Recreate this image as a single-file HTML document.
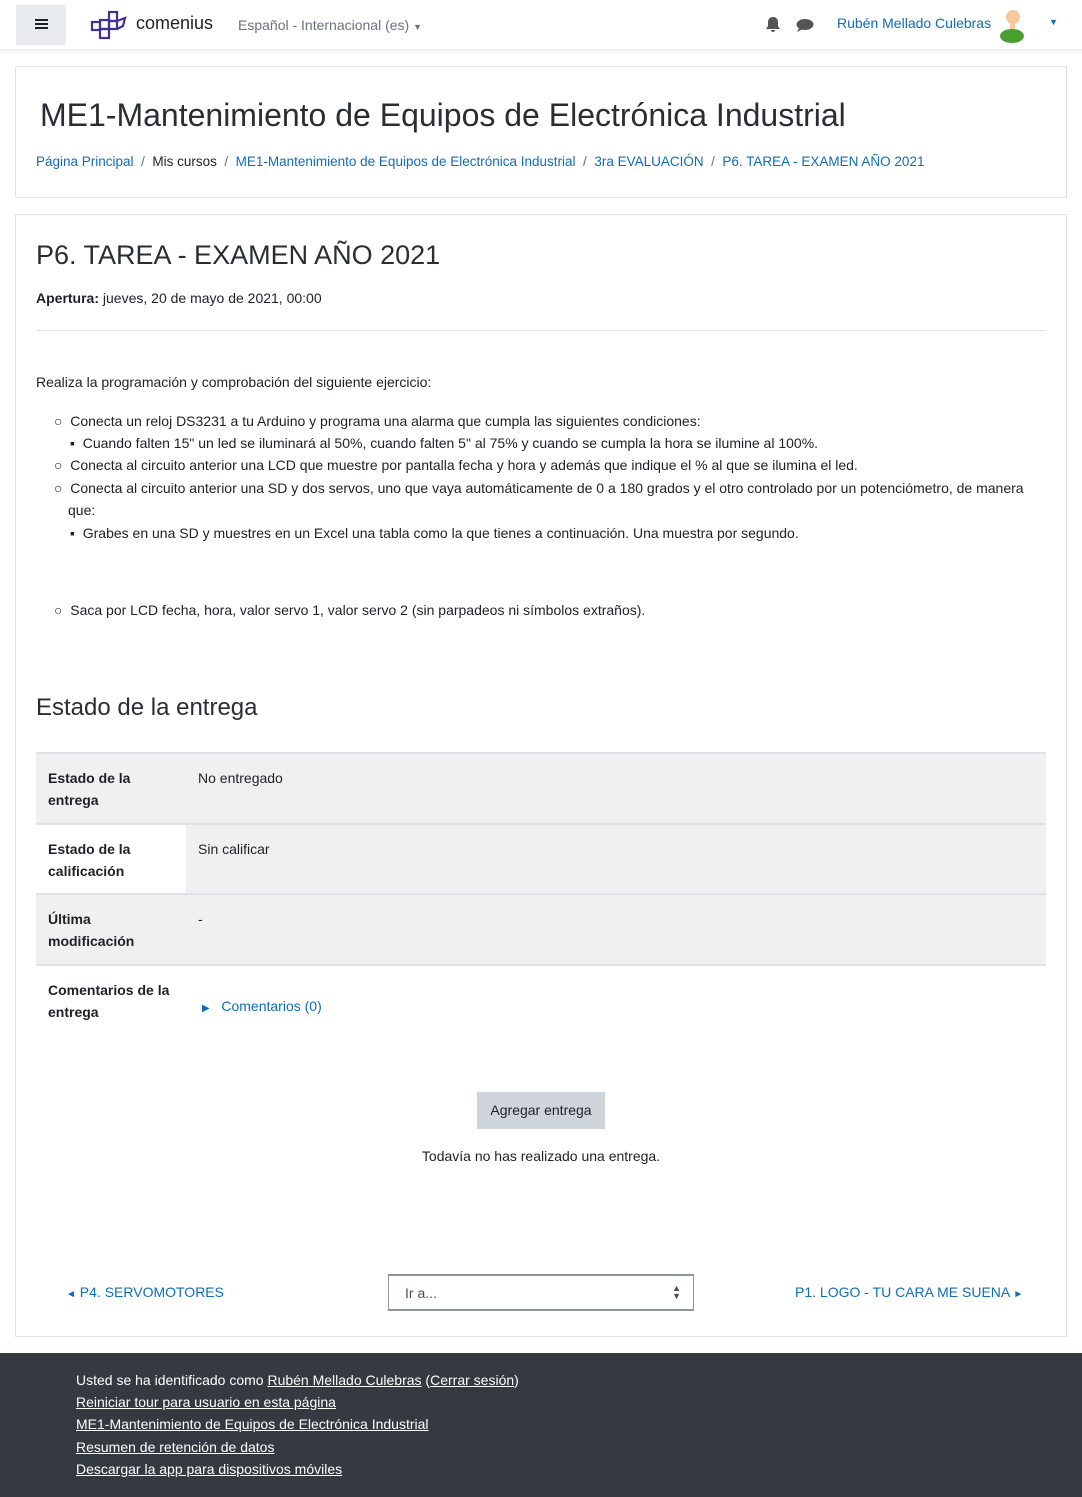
<!DOCTYPE html>
<html><head><meta charset="utf-8"><style>
*{box-sizing:border-box;margin:0;padding:0}
body{width:1082px;height:1497px;background:#fff;font-family:"Liberation Sans",sans-serif;font-size:14px;color:#1d2125;position:relative;overflow:hidden}
a{color:#0f6cbf;text-decoration:none}
.abs{position:absolute;white-space:nowrap}
.nav{position:absolute;left:0;top:0;width:1082px;height:50px;background:#fff;box-shadow:0 2px 4px rgba(0,0,0,.08);border-bottom:1px solid #eee}
.card{position:absolute;border:1px solid #dee2e6;background:#fff}
.row{position:absolute;left:36px;width:1010px;background:#f0f0f0;border-top:2px solid #dee2e6}
.row b{position:absolute;left:12px;top:13px;font-size:14px;line-height:22px;width:130px;white-space:normal}
.row span{position:absolute;left:162px;top:13px;line-height:22px}
.foot{position:absolute;left:0;top:1353px;width:1082px;height:144px;background:#343a40;color:#fff}
.foot div{position:absolute;left:76px;font-size:14px}
.foot a{color:#fff;text-decoration:underline}
.lt{font-weight:normal;color:#2a2e33}
</style></head><body>
<div class="nav">
 <div class="abs" style="left:16px;top:5px;width:50px;height:40px;background:#e9ecef"></div>
 <div class="abs" style="left:35px;top:19px;width:13px;height:2px;background:#1d2125;box-shadow:0 4px 0 #1d2125,0 8px 0 #1d2125"></div>
 <svg class="abs" style="left:90px;top:10px" width="38" height="30" viewBox="0 0 38 30" fill="none" stroke="#3f3196" stroke-width="2.2"><rect x="2" y="12" width="8" height="8"/><rect x="10" y="10" width="9" height="9"/><rect x="19" y="2" width="8" height="9"/><rect x="19" y="11" width="8" height="8"/><rect x="10" y="19" width="9" height="9"/><path d="M27 11 L35 8 L33 16 L27 19"/></svg>
 <div class="abs" style="left:136px;top:13px;font-size:18px;color:#1d2125">comenius</div>
 <div class="abs" style="left:238px;top:17px;font-size:14px;color:#6a737b">Español - Internacional (es) <span style="font-size:9px">▼</span></div>
 <svg class="abs" style="left:765px;top:16px" width="16" height="17" viewBox="0 0 16 17" fill="#555"><path d="M8 1c-3 0-5 2-5 5v4l-2 3h14l-2-3V6c0-3-2-5-5-5z M6 14h4a2 2 0 0 1-4 0z"/></svg>
 <svg class="abs" style="left:796px;top:18px" width="18" height="15" viewBox="0 0 18 15" fill="#555"><ellipse cx="9" cy="6.5" rx="8.5" ry="5.5"/><path d="M3 10 L1 14 L7 11z"/></svg>
 <div class="abs" style="left:837px;top:15px;font-size:14px;color:#0f6cbf">Rubén Mellado Culebras</div>
 <svg class="abs" style="left:998px;top:8px" width="30" height="36" viewBox="0 0 30 36"><circle cx="15" cy="9" r="7" fill="#f5c99b"/><rect x="12" y="14" width="5" height="8" fill="#f5c99b"/><ellipse cx="14" cy="28" rx="12" ry="7" fill="#4a9e2f"/></svg>
 <div class="abs" style="left:1049px;top:17px;font-size:9px;color:#0f6cbf">▼</div>
</div>

<div class="card" style="left:15px;top:66px;width:1052px;height:132px">
 <div class="abs lt" style="left:24px;top:30px;font-size:32px">ME1-Mantenimiento de Equipos de Electrónica Industrial</div>
 <div class="abs" style="left:20px;top:87px;font-size:13.5px;color:#6a737b"><a>Página Principal</a> &nbsp;/&nbsp; <span style="color:#1d2125">Mis cursos</span> &nbsp;/&nbsp; <a>ME1-Mantenimiento de Equipos de Electrónica Industrial</a> &nbsp;/&nbsp; <a>3ra EVALUACIÓN</a> &nbsp;/&nbsp; <a>P6. TAREA - EXAMEN AÑO 2021</a></div>
</div>

<div class="card" style="left:15px;top:214px;width:1052px;height:1123px"></div>
<div class="abs lt" style="left:36px;top:240px;font-size:27px">P6. TAREA - EXAMEN AÑO 2021</div>
<div class="abs" style="left:36px;top:290px"><b>Apertura:</b> jueves, 20 de mayo de 2021, 00:00</div>
<div class="abs" style="left:36px;top:330px;width:1010px;height:1px;background:#dee2e6"></div>
<div class="abs" style="left:36px;top:374px">Realiza la programación y comprobación del siguiente ejercicio:</div>
<div class="abs" style="left:54px;top:413px">○ &nbsp;Conecta un reloj DS3231 a tu Arduino y programa una alarma que cumpla las siguientes condiciones:</div>
<div class="abs" style="left:70px;top:435px">▪ &nbsp;Cuando falten 15" un led se iluminará al 50%, cuando falten 5" al 75% y cuando se cumpla la hora se ilumine al 100%.</div>
<div class="abs" style="left:54px;top:457px">○ &nbsp;Conecta al circuito anterior una LCD que muestre por pantalla fecha y hora y además que indique el % al que se ilumina el led.</div>
<div class="abs" style="left:54px;top:480px">○ &nbsp;Conecta al circuito anterior una SD y dos servos, uno que vaya automáticamente de 0 a 180 grados y el otro controlado por un potenciómetro, de manera</div>
<div class="abs" style="left:68px;top:502px">que:</div>
<div class="abs" style="left:70px;top:525px">▪ &nbsp;Grabes en una SD y muestres en un Excel una tabla como la que tienes a continuación. Una muestra por segundo.</div>
<div class="abs" style="left:54px;top:602px">○ &nbsp;Saca por LCD fecha, hora, valor servo 1, valor servo 2 (sin parpadeos ni símbolos extraños).</div>

<div class="abs lt" style="left:36px;top:694px;font-size:24px">Estado de la entrega</div>
<div class="row" style="top:752px;height:72px"><b>Estado de la entrega</b><span>No entregado</span></div>
<div class="row" style="top:823px;height:71px"><div style="position:absolute;left:0;top:0;width:150px;height:69px;background:#fff"></div><b>Estado de la calificación</b><span>Sin calificar</span></div>
<div class="row" style="top:893px;height:72px"><b>Última modificación</b><span>-</span></div>
<div class="row" style="top:964px;height:76px;background:#fff"><b>Comentarios de la entrega</b><span style="top:29px;left:166px;color:#0f6cbf"><span style="position:static;font-size:10px">▶</span>&nbsp;&nbsp; Comentarios (0)</span></div>

<div class="abs" style="left:477px;top:1092px;width:128px;height:37px;background:#ced4da;text-align:center;line-height:37px">Agregar entrega</div>
<div class="abs" style="left:0;width:1082px;top:1148px;text-align:center">Todavía no has realizado una entrega.</div>

<div class="abs" style="left:66px;top:1284px;color:#0f6cbf"><span style="font-size:10px">◄</span> P4. SERVOMOTORES</div>
<div class="abs" style="left:388px;top:1274px;width:306px;height:37px;border:1px solid #8f959e;border-top:2px solid #8f959e;border-bottom:2px solid #8f959e;padding:9px 16px;color:#495057">Ir a...<span style="position:absolute;right:12px;top:8px;font-size:9px;line-height:8px">▲<br>▼</span></div>
<div class="abs" style="left:795px;top:1284px;color:#0f6cbf">P1. LOGO - TU CARA ME SUENA <span style="font-size:10px">►</span></div>

<div class="foot">
 <div style="top:19px">Usted se ha identificado como <a>Rubén Mellado Culebras</a> (<a>Cerrar sesión</a>)</div>
 <div style="top:41px"><a>Reiniciar tour para usuario en esta página</a></div>
 <div style="top:63px"><a>ME1-Mantenimiento de Equipos de Electrónica Industrial</a></div>
 <div style="top:86px"><a>Resumen de retención de datos</a></div>
 <div style="top:108px"><a>Descargar la app para dispositivos móviles</a></div>
</div>
</body></html>
